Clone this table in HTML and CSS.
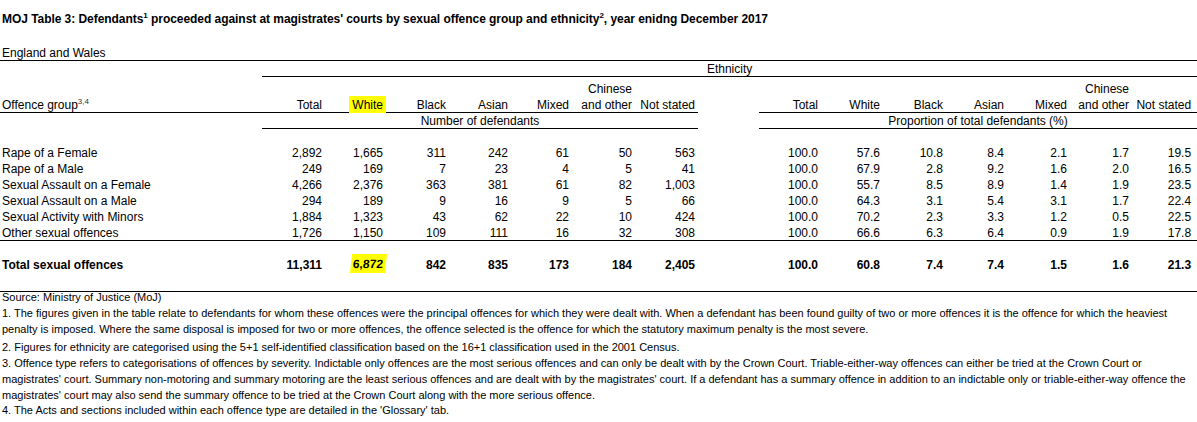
FILE: index.html
```html
<!DOCTYPE html>
<html lang="en">
<head>
<meta charset="utf-8">
<title>MOJ Table 3</title>
<link rel="stylesheet" href="styles.css">
</head>
<body>
<div class="sheet">
  <h1 class="title">MOJ Table 3: Defendants<sup>1</sup> proceeded against at magistrates' courts by sexual offence group and ethnicity<sup>2</sup>, year enidng December 2017</h1>
  <table class="grid">
    <colgroup>
      <col class="c1"><col class="c2"><col class="c3"><col class="c4"><col class="c5"><col class="c6"><col class="c7"><col class="c8">
      <col class="c9">
      <col class="c10"><col class="c11"><col class="c12"><col class="c13"><col class="c14"><col class="c15"><col class="c16">
    </colgroup>
    <tbody>
      <tr>
        <td colspan="16" class="label rule">England and Wales</td>
      </tr>
      <tr>
        <td></td>
        <td colspan="15" class="center rule">Ethnicity</td>
      </tr>
      <tr class="head">
        <td class="label rule">Offence group<sup class="note">3,4</sup></td>
        <td class="rule">Total</td>
        <td class="rule"><span class="mark">White</span></td>
        <td class="rule">Black</td>
        <td class="rule">Asian</td>
        <td class="rule">Mixed</td>
        <td class="rule">Chinese<br>and other</td>
        <td class="rule">Not stated</td>
        <td></td>
        <td class="rule">Total</td>
        <td class="rule">White</td>
        <td class="rule">Black</td>
        <td class="rule">Asian</td>
        <td class="rule">Mixed</td>
        <td class="rule">Chinese<br>and other</td>
        <td class="rule last">Not stated</td>
      </tr>
      <tr>
        <td></td>
        <td colspan="7" class="center rule">Number of defendants</td>
        <td></td>
        <td colspan="7" class="center rule">Proportion of total defendants (%)</td>
      </tr>
      <tr class="blank"><td colspan="16"></td></tr>
      <tr>
        <td class="label">Rape of a Female</td>
        <td>2,892</td><td>1,665</td><td>311</td><td>242</td><td>61</td><td>50</td><td>563</td>
        <td></td>
        <td>100.0</td><td>57.6</td><td>10.8</td><td>8.4</td><td>2.1</td><td>1.7</td><td class="last">19.5</td>
      </tr>
      <tr>
        <td class="label">Rape of a Male</td>
        <td>249</td><td>169</td><td>7</td><td>23</td><td>4</td><td>5</td><td>41</td>
        <td></td>
        <td>100.0</td><td>67.9</td><td>2.8</td><td>9.2</td><td>1.6</td><td>2.0</td><td class="last">16.5</td>
      </tr>
      <tr>
        <td class="label">Sexual Assault on a Female</td>
        <td>4,266</td><td>2,376</td><td>363</td><td>381</td><td>61</td><td>82</td><td>1,003</td>
        <td></td>
        <td>100.0</td><td>55.7</td><td>8.5</td><td>8.9</td><td>1.4</td><td>1.9</td><td class="last">23.5</td>
      </tr>
      <tr>
        <td class="label">Sexual Assault on a Male</td>
        <td>294</td><td>189</td><td>9</td><td>16</td><td>9</td><td>5</td><td>66</td>
        <td></td>
        <td>100.0</td><td>64.3</td><td>3.1</td><td>5.4</td><td>3.1</td><td>1.7</td><td class="last">22.4</td>
      </tr>
      <tr>
        <td class="label">Sexual Activity with Minors</td>
        <td>1,884</td><td>1,323</td><td>43</td><td>62</td><td>22</td><td>10</td><td>424</td>
        <td></td>
        <td>100.0</td><td>70.2</td><td>2.3</td><td>3.3</td><td>1.2</td><td>0.5</td><td class="last">22.5</td>
      </tr>
      <tr class="ruled">
        <td class="label">Other sexual offences</td>
        <td>1,726</td><td>1,150</td><td>109</td><td>111</td><td>16</td><td>32</td><td>308</td>
        <td></td>
        <td>100.0</td><td>66.6</td><td>6.3</td><td>6.4</td><td>0.9</td><td>1.9</td><td class="last">17.8</td>
      </tr>
      <tr class="spacer-short"><td colspan="16"></td></tr>
      <tr class="total">
        <td class="label">Total sexual offences</td>
        <td>11,311</td><td><span class="mark mark-tilt">6,872</span></td><td>842</td><td>835</td><td>173</td><td>184</td><td>2,405</td>
        <td></td>
        <td>100.0</td><td>60.8</td><td>7.4</td><td>7.4</td><td>1.5</td><td>1.6</td><td class="last">21.3</td>
      </tr>
      <tr class="spacer-tall ruled"><td colspan="16"></td></tr>
    </tbody>
  </table>
  <div class="notes">
    <p>Source: Ministry of Justice (MoJ)</p>
    <p class="gap">1. The figures given in the table relate to defendants for whom these offences were the principal offences for which they were dealt with. When a defendant has been found guilty of two or more offences it is the offence for which the heaviest<br>penalty is imposed. Where the same disposal is imposed for two or more offences, the offence selected is the offence for which the statutory maximum penalty is the most severe.</p>
    <p>2. Figures for ethnicity are categorised using the 5+1 self-identified classification based on the 16+1 classification used in the 2001 Census.</p>
    <p>3. Offence type refers to categorisations of offences by severity. Indictable only offences are the most serious offences and can only be dealt with by the Crown Court. Triable-either-way offences can either be tried at the Crown Court or<br>magistrates' court. Summary non-motoring and summary motoring are the least serious offences and are dealt with by the magistrates' court. If a defendant has a summary offence in addition to an indictable only or triable-either-way offence the<br>magistrates' court may also send the summary offence to be tried at the Crown Court along with the more serious offence.</p>
    <p>4. The Acts and sections included within each offence type are detailed in the 'Glossary' tab.</p>
  </div>
</div>
</body>
</html>
```

FILE: styles.css
```css
* {
  box-sizing: border-box;
}

html, body {
  margin: 0;
  padding: 0;
  background: #ffffff;
}

body {
  color: #000000;
  font-family: "Liberation Sans", Arial, sans-serif;
}

.sheet {
  width: 1197px;
}

.title {
  margin: 0;
  height: 45px;
  padding: 11px 0 0 2px;
  font-size: 12px;
  line-height: 16px;
  font-weight: bold;
  letter-spacing: -0.05px;
  white-space: nowrap;
}

.title sup {
  font-size: 8px;
  line-height: 0;
  vertical-align: 5px;
}

.grid {
  width: 1197px;
  table-layout: fixed;
  border-collapse: collapse;
  border-spacing: 0;
  font-size: 12px;
}

.c1 { width: 262px; }
.c2 { width: 63px; }
.c3 { width: 61px; }
.c4 { width: 63px; }
.c5 { width: 62px; }
.c6 { width: 61px; }
.c7 { width: 63px; }
.c8 { width: 63px; }
.c9 { width: 61px; }
.c10 { width: 62px; }
.c11 { width: 62px; }
.c12 { width: 63px; }
.c13 { width: 61px; }
.c14 { width: 63px; }
.c15 { width: 62px; }
.c16 { width: 65px; }

.grid td {
  height: 16px;
  padding: 0 3px 0 0;
  line-height: 16px;
  text-align: right;
  vertical-align: bottom;
  white-space: nowrap;
  overflow: visible;
}

.grid td.label {
  text-align: left;
  padding-left: 2px;
}

.grid td.center {
  text-align: center;
  padding-right: 0;
}

.grid td.last {
  padding-right: 6px;
}

.grid .rule,
.grid .ruled td {
  background: linear-gradient(#000000, #000000) left bottom / 100% 1px no-repeat;
}

.grid .head td {
  height: 36px;
}

.grid .spacer-short td {
  height: 13px;
}

.grid .spacer-tall td {
  height: 19px;
}

.grid .total td {
  font-weight: bold;
}

.note {
  font-size: 8px;
  line-height: 0;
  vertical-align: 5px;
  color: #333333;
}

.mark {
  display: inline-block;
  background: #ffff00;
  line-height: 14px;
  padding: 2px 3px 1px 3px;
  margin-right: -3px;
}

.mark-tilt {
  padding: 3px 3px 2px 2px;
  transform: skewX(-6deg);
}

.notes {
  margin-top: -2px;
  padding-left: 2px;
  font-size: 11px;
  line-height: 15.75px;
  white-space: nowrap;
}

.notes p {
  margin: 0;
}

.notes p.gap {
  margin-bottom: 3px;
}
```
